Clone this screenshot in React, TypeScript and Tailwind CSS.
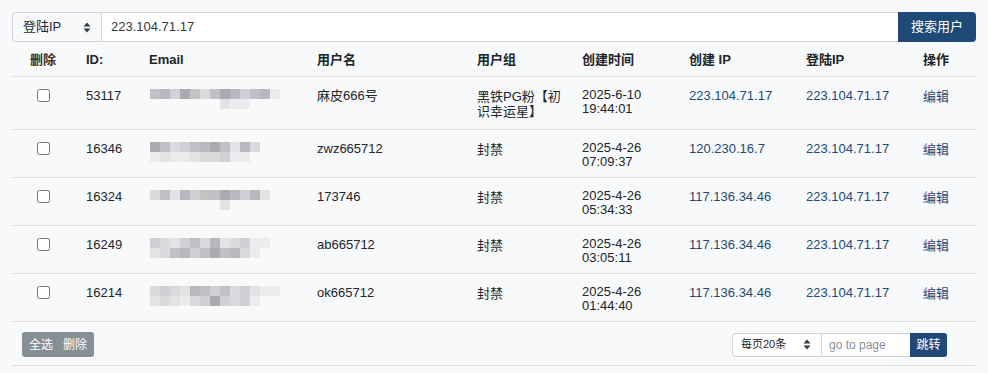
import React from "react"

const font = { fontFamily: '"Liberation Sans", Arial, "Noto Sans CJK SC", sans-serif' }

const shades = [
  "bg-[#bfc1c4]",
  "bg-[#cfd1d4]",
  "bg-[#d9dadc]",
  "bg-[#a9abae]",
  "bg-[#c6c2c0]",
  "bg-[#e2e3e5]",
  "bg-[#b7b9bc]",
  "bg-[#ebecee]",
]

type Row = {
  id: string
  name: string
  group: string
  date: string
  time: string
  createIp: string
  mosaic: number[][]
}

const rows: Row[] = [
  {
    id: "53117",
    name: "麻皮666号",
    group: "黑铁PG粉【初识幸运星】",
    date: "2025-6-10",
    time: "19:44:01",
    createIp: "223.104.71.17",
    mosaic: [
      [0, 6, 1, 3, 4, 2, 0, 3, 6, 1, 0, 6, 7],
      [-1, -1, -1, -1, -1, -1, -1, 5, 7, 7],
    ],
  },
  {
    id: "16346",
    name: "zwz665712",
    group: "封禁",
    date: "2025-4-26",
    time: "07:09:37",
    createIp: "120.230.16.7",
    mosaic: [
      [3, 0, 2, 1, 0, 6, 3, 0, 5, 6, 2],
      [7, 5, 7, 7, 5, 2, 2, 1, 7, 7],
    ],
  },
  {
    id: "16324",
    name: "173746",
    group: "封禁",
    date: "2025-4-26",
    time: "05:34:33",
    createIp: "117.136.34.46",
    mosaic: [
      [2, 0, 5, 6, 1, 4, 0, 3, 6, 1, 6, 5],
      [-1, -1, -1, -1, -1, -1, -1, 5],
    ],
  },
  {
    id: "16249",
    name: "ab665712",
    group: "封禁",
    date: "2025-4-26",
    time: "03:05:11",
    createIp: "117.136.34.46",
    mosaic: [
      [1, 2, 5, 1, 0, 2, 6, 5, 2, 1, 7, 7],
      [5, 2, 0, 6, 1, 0, 3, 0, 6, 2, 7],
    ],
  },
  {
    id: "16214",
    name: "ok665712",
    group: "封禁",
    date: "2025-4-26",
    time: "01:44:40",
    createIp: "117.136.34.46",
    mosaic: [
      [2, 1, 2, 5, 6, 0, 1, 0, 2, 1, 5, 7, 7],
      [5, 2, 5, 7, 2, 1, 3, 1, 2, 1, 7],
    ],
  },
]

function Mosaic({ grid }: { grid: number[][] }) {
  return (
    <div className="flex flex-col">
      {grid.map((line, i) => (
        <div key={i} className="flex h-[10px]">
          {line.map((c, j) => (
            <div key={j} className={`h-[10px] w-[10px] ${c < 0 ? "" : shades[c]}`} />
          ))}
        </div>
      ))}
    </div>
  )
}

function UpDown() {
  return (
    <svg width="8" height="11" viewBox="0 0 8 11" className="text-[#343a40]">
      <path d="M4 0.5L7.5 4.5H0.5Z" fill="currentColor" />
      <path d="M4 10.5L7.5 6.5H0.5Z" fill="currentColor" />
    </svg>
  )
}

const cols = "grid grid-cols-[62px_63px_168px_160px_105px_107px_117px_117px_67px]"

export default function App() {
  return (
    <div className="min-h-[373px] w-[988px] bg-[#f8f9fa] text-[13px] text-[#212529]" style={font}>
      <div className="px-3 pt-3">
        {/* search bar */}
        <div className="flex h-[30px]">
          <div className="flex w-[90px] items-center justify-between rounded-l-[3px] border border-[#ced4da] bg-[#f8f9fa] pl-[10px] pr-[10px]">
            <span className="text-[13px]">登陆IP</span>
            <UpDown />
          </div>
          <div className="flex flex-1 items-center border-y border-[#ced4da] bg-white pl-[9px] text-[13px] text-[#343a40]">
            223.104.71.17
          </div>
          <button className="w-[78px] rounded-r-[4px] bg-[#1f4a78] text-[13px] text-white">搜索用户</button>
        </div>

        {/* table */}
        <div className={`${cols} border-b border-[#dee2e6] font-bold leading-[14px]`}>
          <div className="pb-[9px] pt-[11px] text-center text-[#4a2e14]">删除</div>
          <div className="px-3 pb-[9px] pt-[11px]">ID:</div>
          <div className="px-3 pb-[9px] pt-[11px]">Email</div>
          <div className="px-3 pb-[9px] pt-[11px]">用户名</div>
          <div className="px-3 pb-[9px] pt-[11px]">用户组</div>
          <div className="px-3 pb-[9px] pt-[11px]">创建时间</div>
          <div className="px-3 pb-[9px] pt-[11px]">创建 IP</div>
          <div className="px-3 pb-[9px] pt-[11px]">登陆IP</div>
          <div className="px-3 pb-[9px] pt-[11px]">操作</div>
        </div>

        {rows.map((r) => (
          <div key={r.id} className={`${cols} border-b border-[#dee2e6] leading-[14px]`}>
            <div className="flex justify-center pb-[8px] pt-3">
              <input type="checkbox" className="h-[13px] w-[13px]" />
            </div>
            <div className="px-3 pb-[8px] pt-3">{r.id}</div>
            <div className="pb-[8px] pl-[13px] pt-3">
              <Mosaic grid={r.mosaic} />
            </div>
            <div className="px-3 pb-[8px] pt-3">{r.name}</div>
            <div className="pb-[10px] pl-3 pr-[8px] pt-3 leading-[15px]">{r.group}</div>
            <div className="px-3 pb-[8px] pt-[11px]">
              <div>{r.date}</div>
              <div>{r.time}</div>
            </div>
            <div className="px-3 pb-[8px] pt-3 text-[#1f4a78]">{r.createIp}</div>
            <div className="px-3 pb-[8px] pt-3 text-[#1f4a78]">223.104.71.17</div>
            <div className="px-3 pb-[8px] pt-[13px] text-[#1f4a78]">编辑</div>
          </div>
        ))}

        {/* footer */}
        <div className="flex items-center justify-between border-b border-[#dee2e6] pb-[8px] pl-[10px] pr-[29px] pt-[10px]">
          <div className="flex h-[25px] items-center gap-[10px] rounded-[3px] bg-[#868e96] px-[7px] text-[12px] text-white">
            <span>全选</span>
            <span>删除</span>
          </div>
          <div className="flex h-[24px]">
            <div className="flex w-[90px] items-center justify-between rounded-l-[3px] border border-[#ced4da] bg-white pl-[8px] pr-[10px] text-[11px]">
              <span>每页20条</span>
              <UpDown />
            </div>
            <div className="flex w-[88px] items-center border-y border-[#ced4da] bg-white pl-[7px] text-[12px] text-[#8a9096]">
              go to page
            </div>
            <button className="w-[37px] rounded-r-[3px] bg-[#1f4a78] text-[12px] text-white">跳转</button>
          </div>
        </div>
      </div>
    </div>
  )
}
